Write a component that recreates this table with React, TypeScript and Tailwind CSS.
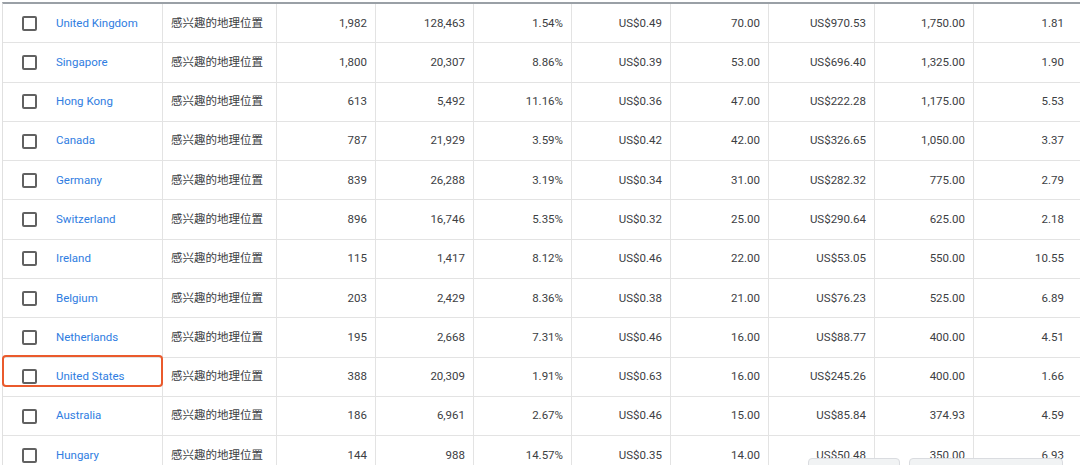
import React from "react";

const rows: string[][] = [
  ["United Kingdom", "1,982", "128,463", "1.54%", "US$0.49", "70.00", "US$970.53", "1,750.00", "1.81"],
  ["Singapore", "1,800", "20,307", "8.86%", "US$0.39", "53.00", "US$696.40", "1,325.00", "1.90"],
  ["Hong Kong", "613", "5,492", "11.16%", "US$0.36", "47.00", "US$222.28", "1,175.00", "5.53"],
  ["Canada", "787", "21,929", "3.59%", "US$0.42", "42.00", "US$326.65", "1,050.00", "3.37"],
  ["Germany", "839", "26,288", "3.19%", "US$0.34", "31.00", "US$282.32", "775.00", "2.79"],
  ["Switzerland", "896", "16,746", "5.35%", "US$0.32", "25.00", "US$290.64", "625.00", "2.18"],
  ["Ireland", "115", "1,417", "8.12%", "US$0.46", "22.00", "US$53.05", "550.00", "10.55"],
  ["Belgium", "203", "2,429", "8.36%", "US$0.38", "21.00", "US$76.23", "525.00", "6.89"],
  ["Netherlands", "195", "2,668", "7.31%", "US$0.46", "16.00", "US$88.77", "400.00", "4.51"],
  ["United States", "388", "20,309", "1.91%", "US$0.63", "16.00", "US$245.26", "400.00", "1.66"],
  ["Australia", "186", "6,961", "2.67%", "US$0.46", "15.00", "US$85.84", "374.93", "4.59"],
  ["Hungary", "144", "988", "14.57%", "US$0.35", "14.00", "US$50.48", "350.00", "6.93"],
];

const numWidths = ["w-[99px]", "w-[98px]", "w-[98px]", "w-[99px]", "w-[98px]", "w-[106px]", "w-[99px]", "w-[110px]"];

export default function App() {
  return (
    <div
      className="relative w-[1080px] h-[465px] overflow-hidden bg-white pt-[2px]"
      style={{ fontFamily: 'Roboto, "Noto Sans CJK SC", "Noto Sans", sans-serif' }}
    >
      <div className="ml-[2px] border-l border-t-2 border-l-[#e0e0e0] border-t-[#9aa0a6] w-[1100px]">
        {rows.map((r, i) => (
          <div key={i} className="flex h-[39.3px] border-b border-[#e3e3e3] text-[11.5px] text-[#3c4043]">
            <div className="w-[160px] shrink-0 border-r border-[#e3e3e3] flex items-center pl-[19px]">
              <div className="w-[15px] h-[15px] border-2 border-[#616161] rounded-[2px] shrink-0" />
              <span className="ml-[19px] text-[#2f7de1] whitespace-nowrap">{r[0]}</span>
            </div>
            <div className="w-[114px] shrink-0 border-r border-[#e3e3e3] flex items-center pl-[8px] whitespace-nowrap">
              感兴趣的地理位置
            </div>
            {r.slice(1).map((v, j) => (
              <div
                key={j}
                className={`${numWidths[j]} shrink-0 ${j < 7 ? "border-r border-[#e3e3e3]" : ""} flex items-center justify-end ${j === 7 ? "pr-[20px]" : "pr-[8px]"} whitespace-nowrap`}
              >
                {v}
              </div>
            ))}
          </div>
        ))}
      </div>

      {/* highlight */}
      <div className="absolute left-[2px] top-[355px] w-[161px] h-[32px] border-2 border-[#ea5a2c] rounded-[4px]" />

      {/* bottom overlays */}
      <div className="absolute left-[808px] top-[458px] w-[92px] h-[20px] bg-[#f1f3f4] border border-[#dadce0] rounded-[4px]" />
      <div className="absolute left-[909px] top-[458px] w-[154px] h-[20px] bg-[#f1f3f4] border border-[#dadce0] rounded-[4px]" />
    </div>
  );
}
